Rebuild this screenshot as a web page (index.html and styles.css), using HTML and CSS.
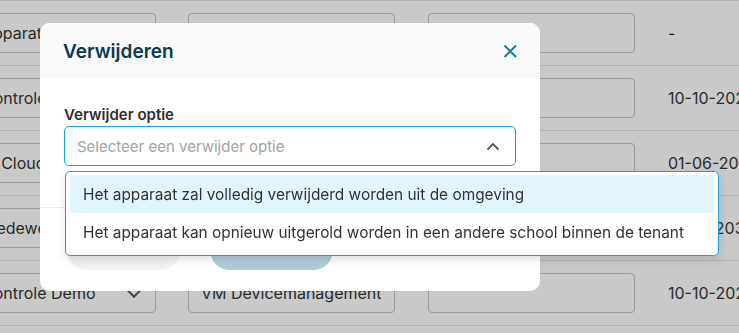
FILE: index.html
```html
<!DOCTYPE html>
<html lang="nl">

<head>
    <meta charset="UTF-8">
    <meta name="viewport" content="width=device-width, initial-scale=1.0">
    <title>Verwijderen</title>
    <link rel="stylesheet" href="styles.css">
</head>

<body>
    <div class="table">
        <div class="row">
            <div class="field select">Apparatuur<span class="chev"></span></div>
            <div class="field"></div>
            <div class="field"></div>
            <div class="cell">-</div>
        </div>
        <div class="row">
            <div class="field select">Controle<span class="chev"></span></div>
            <div class="field"></div>
            <div class="field"></div>
            <div class="cell">10-10-2023</div>
        </div>
        <div class="row">
            <div class="field select">IT Cloudwerkplek<span class="chev"></span></div>
            <div class="field"></div>
            <div class="field"></div>
            <div class="cell">01-06-2023</div>
        </div>
        <div class="row">
            <div class="field select">Medewerkers<span class="chev"></span></div>
            <div class="field"></div>
            <div class="field"></div>
            <div class="cell">31-12-2030</div>
        </div>
        <div class="row">
            <div class="field select">Controle Demo<span class="chev"></span></div>
            <div class="field">VM Devicemanagement</div>
            <div class="field"></div>
            <div class="cell">10-10-2023</div>
        </div>
    </div>

    <div class="overlay"></div>

    <div class="modal">
        <div class="modal-header">
            <h2>Verwijderen</h2>
            <svg class="close" width="16" height="16" viewBox="0 0 16 16">
                <path d="M2.5 2.5 L14 14 M14 2.5 L2.5 14" stroke="#17808a" stroke-width="2" fill="none" />
            </svg>
        </div>
        <div class="modal-body">
            <label>Verwijder optie</label>
            <div class="picker">
                <span class="placeholder">Selecteer een verwijder optie</span>
                <svg width="14" height="9" viewBox="0 0 14 9">
                    <path d="M1.5 7.5 L7 2 L12.5 7.5" stroke="#555" stroke-width="1.8" fill="none" />
                </svg>
            </div>
        </div>
        <div class="modal-footer">
            <button class="btn btn-cancel"></button>
            <button class="btn btn-primary"></button>
        </div>
    </div>

    <ul class="options">
        <li class="active">Het apparaat zal volledig verwijderd worden uit de omgeving</li>
        <li>Het apparaat kan opnieuw uitgerold worden in een andere school binnen de tenant</li>
    </ul>
</body>

</html>
```

FILE: styles.css
```css
body {
    margin: 0;
    font-family: Inter, "Noto Sans", sans-serif;
    background-color: #fff;
    color: #363636;
    overflow: hidden;
}

.table {
    margin-left: -31px;
    border-top: 1px solid #e6e6e6;
}

.row {
    display: grid;
    grid-template-columns: 186px 207px 207px 1fr;
    column-gap: 33px;
    align-items: center;
    padding: 12px 0 12px 0;
    border-bottom: 1px solid #e6e6e6;
    font-size: 16px;
}

.row .field:first-child {
    margin-right: -1px;
}

.field {
    height: 40px;
    box-sizing: border-box;
    border: 1px solid #c4c5c7;
    border-radius: 4px;
    padding: 0 12px;
    display: flex;
    align-items: center;
    white-space: nowrap;
    overflow: hidden;
}

.select {
    justify-content: space-between;
}

.chev {
    flex-shrink: 0;
    width: 8px;
    height: 8px;
    border-right: 2px solid #555;
    border-bottom: 2px solid #555;
    transform: rotate(45deg);
    margin: -4px 4px 0 0;
}

.cell {
    white-space: nowrap;
}

.overlay {
    position: fixed;
    inset: 0;
    background-color: rgba(0, 0, 0, 0.21);
}

.modal {
    position: absolute;
    left: 40px;
    top: 23px;
    width: 500px;
    height: 268px;
    background-color: #fff;
    border-radius: 10px;
    overflow: hidden;
}

.modal-header {
    height: 56px;
    background-color: #f9f9f9;
    display: flex;
    align-items: center;
    justify-content: space-between;
    padding: 0 22px 0 23px;
}

.modal-header h2 {
    margin: 0;
    font-size: 19px;
    font-weight: 600;
    color: #0c3a52;
}

.modal-body {
    padding: 26px 24px 0 24px;
    height: 102px;
    border-bottom: 1px solid #ececec;
}

label {
    display: block;
    font-size: 15px;
    font-weight: 600;
    color: #2e2e2e;
    margin-bottom: 2px;
}

.picker {
    height: 40px;
    box-sizing: border-box;
    border: 1px solid #1ba1dc;
    border-radius: 5px;
    display: flex;
    align-items: center;
    justify-content: space-between;
    padding: 0 15px 0 12px;
}

.placeholder {
    font-size: 15px;
    color: #a3a3a3;
}

.modal-footer {
    display: flex;
    gap: 30px;
    padding: 22px 0 0 27px;
}

.btn {
    height: 40px;
    border: none;
    border-radius: 20px;
}

.btn-cancel {
    width: 113px;
    background-color: #f1f2f3;
}

.btn-primary {
    width: 123px;
    background-color: #b0cbd8;
}

.options {
    position: absolute;
    left: 65px;
    top: 171px;
    width: 654px;
    box-sizing: border-box;
    margin: 0;
    padding: 3px 4px 4px 4px;
    list-style: none;
    background-color: #fff;
    border: 1px solid #1ba1dc;
    border-radius: 5px;
    box-shadow: 0 4px 10px rgba(0, 0, 0, 0.12);
}

.options li {
    height: 38px;
    display: flex;
    align-items: center;
    padding: 0 13px;
    border-radius: 4px;
    font-size: 15.4px;
    color: #333;
    white-space: nowrap;
}

.options li.active {
    background-color: #e2f5fd;
}
```
